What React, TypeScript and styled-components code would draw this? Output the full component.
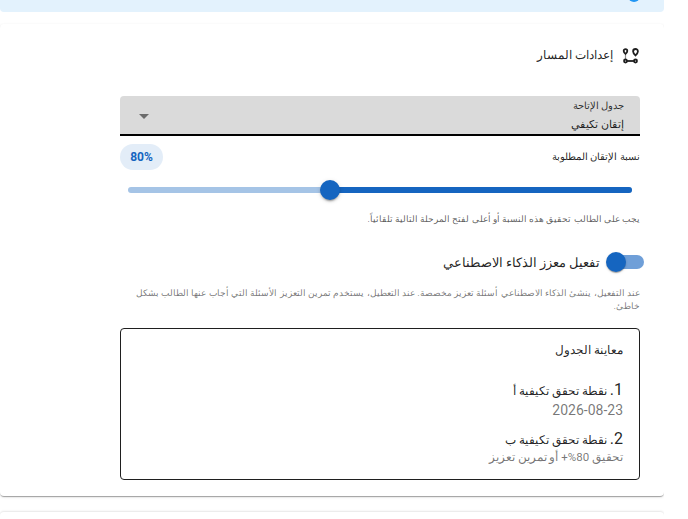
import React from "react";
import styled, { createGlobalStyle } from "styled-components";

const Global = createGlobalStyle`
  html, body { margin: 0; padding: 0; background: #fff; height: 100%; overflow: hidden; }
  body { font-family: Roboto, Helvetica, Arial, "Liberation Sans", sans-serif; color: rgba(0,0,0,.87); }
`;
const Page = styled.div`
  width: 664px;
  height: 519px;
  overflow: hidden;
  display: flex;
  flex-direction: column;
`;
const Alert = styled.div`
  height: 12px;
  flex: none;
  background: #e3f2fd;
  border-radius: 0 0 4px 4px;
  position: relative;
  overflow: hidden;
`;
const AlertDot = styled.span`
  position: absolute;
  right: 24px;
  top: -10px;
  width: 12px;
  height: 12px;
  border-radius: 50%;
  background: #2196f3;
`;
const Card = styled.section`
  flex: none;
  margin-top: 12px;
  height: 472px;
  box-sizing: border-box;
  background: #fff;
  border-radius: 4px;
  box-shadow: 0 2px 1px -1px rgba(0,0,0,.2), 0 1px 1px 0 rgba(0,0,0,.14), 0 1px 3px 0 rgba(0,0,0,.12);
  padding: 21px 24px 16px 120px;
  display: flex;
  flex-direction: column;
  direction: rtl;
`;
const NextCard = styled.section`
  flex: none;
  margin-top: 16px;
  height: 20px;
  border-radius: 4px 4px 0 0;
  box-shadow: 0 -1px 2px rgba(0,0,0,.1);
`;
const Header = styled.h2`
  margin: 0 0 31px;
  height: 20px;
  display: flex;
  align-items: center;
  gap: 9px;
  font-size: 12px;
  font-weight: 400;
  line-height: 20px;
`;
const Select = styled.div`
  height: 40px;
  box-sizing: border-box;
  background: #dadada;
  border-radius: 4px 4px 0 0;
  border-bottom: 2px solid #000;
  padding: 0 16px 0 19px;
  display: flex;
  justify-content: space-between;
  align-items: center;
`;
const SelectText = styled.div`
  display: flex;
  flex-direction: column;
  align-self: flex-start;
  margin-top: 4px;
`;
const SelectLabel = styled.span`
  font-size: 9.6px;
  line-height: 12px;
  color: rgba(0,0,0,.8);
`;
const SelectValue = styled.span`
  margin-top: 5px;
  font-size: 10.6px;
  line-height: 16px;
`;
const Caret = styled.span`
  width: 0;
  height: 0;
  border-left: 5px solid transparent;
  border-right: 5px solid transparent;
  border-top: 5px solid #6b6b6b;
  margin-top: 3px;
`;
const RateRow = styled.div`
  margin-top: 8px;
  display: flex;
  justify-content: space-between;
  align-items: center;
`;
const RateLabel = styled.span`
  font-size: 10.3px;
  line-height: 18px;
`;
const Chip = styled.span`
  width: 43px;
  height: 26px;
  border-radius: 13px;
  background: #e3edf8;
  color: #1565c0;
  font-size: 12px;
  font-weight: 700;
  display: flex;
  align-items: center;
  justify-content: center;
  direction: ltr;
`;
const Slider = styled.div`
  position: relative;
  height: 6px;
  margin: 17px 8px 0;
  border-radius: 3px;
  background: #a5c4e6;
`;
const SliderFill = styled.div`
  position: absolute;
  right: 0;
  top: 0;
  bottom: 0;
  background: #1565c0;
  border-radius: 3px;
`;
const Thumb = styled.div`
  position: absolute;
  width: 20px;
  height: 20px;
  top: -7px;
  margin-left: -10px;
  border-radius: 50%;
  background: #1565c0;
  box-shadow: 0 3px 1px -2px rgba(0,0,0,.2), 0 2px 2px 0 rgba(0,0,0,.14), 0 1px 5px 0 rgba(0,0,0,.12);
`;
const Hint = styled.p`
  margin: 19px 0 0;
  font-size: 8.9px;
  line-height: 14px;
  color: rgba(0,0,0,.65);
`;
const ToggleRow = styled.div`
  margin-top: 26px;
  height: 20px;
  display: flex;
  align-items: center;
  gap: 10px;
  font-size: 12.5px;
`;
const Toggle = styled.span`
  position: relative;
  display: block;
  width: 34px;
  height: 14px;
  margin-right: -4px;
  border-radius: 7px;
  background: #6f9fd8;
`;
const Knob = styled.span`
  position: absolute;
  left: -4px;
  top: -3px;
  width: 20px;
  height: 20px;
  border-radius: 50%;
  background: #1565c0;
  box-shadow: 0 2px 1px -1px rgba(0,0,0,.2), 0 1px 1px 0 rgba(0,0,0,.14), 0 1px 3px 0 rgba(0,0,0,.12);
`;
const Note = styled.p`
  margin: 14px 0 0;
  font-size: 9.4px;
  line-height: 13px;
  color: rgba(0,0,0,.55);
`;
const Preview = styled.div`
  margin-top: 16px;
  height: 152px;
  box-sizing: border-box;
  border: 1px solid #1f1f1f;
  border-radius: 4px;
  padding: 11px 16px 10px;
`;
const PreviewTitle = styled.div`
  font-size: 12.3px;
  line-height: 20px;
  margin-bottom: 19px;
`;
const Item = styled.div`
  margin-bottom: 10px;
`;
const ItemTitle = styled.div`
  font-size: 12.3px;
  line-height: 22px;
`;
const ItemNumber = styled.span`
  font-size: 16px;
`;
const ItemDate = styled.div`
  font-size: 14px;
  line-height: 16px;
  color: rgba(0,0,0,.55);
`;
const ItemSub = styled.div`
  font-size: 11.5px;
  line-height: 12px;
  color: rgba(0,0,0,.55);
`;

const RouteIcon = () => (
  <svg width="18" height="18" viewBox="0 0 18 18" fill="none" stroke="#1f1f1f" strokeWidth="1.8">
    <path d="M3.5 3.2a1.8 1.8 0 0 1 1.8 1.8C5.3 6.1 3.5 8 3.5 8S1.7 6.1 1.7 5a1.8 1.8 0 0 1 1.8-1.8Z" />
    <path d="M13.5 3a2.4 2.4 0 0 1 2.4 2.4c0 1.5-2.4 4-2.4 4s-2.4-2.5-2.4-4A2.4 2.4 0 0 1 13.5 3Z" />
    <circle cx="3.5" cy="15" r="1.5" />
    <circle cx="13.5" cy="15" r="1.5" />
    <path d="M5 15h7" />
    <path d="M3.5 9.5v3.5" strokeDasharray="1 1" strokeWidth="1.2" />
  </svg>
);

export default function App() {
  return (
    <>
      <Global />
      <Page>
        <Alert><AlertDot /></Alert>
        <Card>
          <Header><RouteIcon />إعدادات المسار</Header>
          <Select>
            <SelectText>
              <SelectLabel>جدول الإتاحة</SelectLabel>
              <SelectValue>إتقان تكيفي</SelectValue>
            </SelectText>
            <Caret />
          </Select>
          <RateRow>
            <RateLabel>نسبة الإتقان المطلوبة</RateLabel>
            <Chip>80%</Chip>
          </RateRow>
          <Slider>
            <SliderFill style={{ width: "60%" }} />
            <Thumb style={{ left: "40%" }} />
          </Slider>
          <Hint>يجب على الطالب تحقيق هذه النسبة أو أعلى لفتح المرحلة التالية تلقائياً.</Hint>
          <ToggleRow>
            <Toggle><Knob /></Toggle>
            تفعيل معزز الذكاء الاصطناعي
          </ToggleRow>
          <Note>عند التفعيل، ينشئ الذكاء الاصطناعي أسئلة تعزيز مخصصة. عند التعطيل، يستخدم تمرين التعزيز الأسئلة التي أجاب عنها الطالب بشكل خاطئ.</Note>
          <Preview>
            <PreviewTitle>معاينة الجدول</PreviewTitle>
            <Item>
              <ItemTitle><ItemNumber>1.</ItemNumber> نقطة تحقق تكيفية أ</ItemTitle>
              <ItemDate>2026-08-23</ItemDate>
            </Item>
            <Item>
              <ItemTitle><ItemNumber>2.</ItemNumber> نقطة تحقق تكيفية ب</ItemTitle>
              <ItemSub>تحقيق 80%+ أو تمرين تعزيز</ItemSub>
            </Item>
          </Preview>
        </Card>
        <NextCard />
      </Page>
    </>
  );
}
